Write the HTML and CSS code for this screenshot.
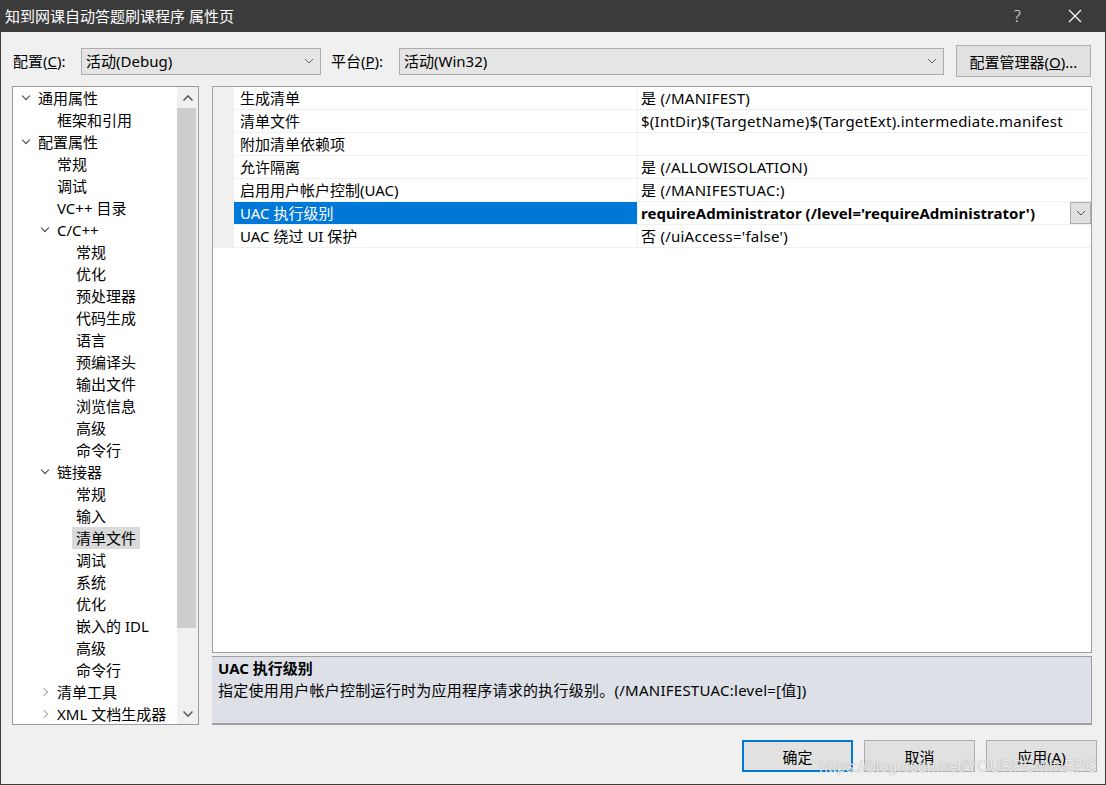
FILE: index.html
```html
<!DOCTYPE html>
<html lang="zh-CN">
<head>
    <meta charset="UTF-8">
    <title>知到网课自动答题刷课程序 属性页</title>
    <link rel="stylesheet" href="styles.css">
</head>
<body>
<div class="window">
    <div class="titlebar">
        <span class="title">知到网课自动答题刷课程序 属性页</span>
        <span class="help">?</span>
        <span class="close">
            <svg width="14" height="14" viewBox="0 0 14 14"><path d="M1 1 L13 13 M13 1 L1 13" stroke="#fff" stroke-width="1.2" fill="none"/></svg>
        </span>
    </div>

    <div class="config-row">
        <span class="config-label">配置(<u>C</u>):</span>
        <div class="combo combo-config">
            <span>活动(Debug)</span>
            <svg class="combo-arrow" width="10" height="6" viewBox="0 0 10 6"><path d="M1 1 L5 5 L9 1" stroke="#606060" fill="none"/></svg>
        </div>
        <span class="config-label platform-label">平台(<u>P</u>):</span>
        <div class="combo combo-platform">
            <span>活动(Win32)</span>
            <svg class="combo-arrow" width="10" height="6" viewBox="0 0 10 6"><path d="M1 1 L5 5 L9 1" stroke="#606060" fill="none"/></svg>
        </div>
        <button class="btn btn-manager">配置管理器(<u>O</u>)...</button>
    </div>

    <div class="main">
        <div class="tree">
            <ul class="tree-list">
                <li class="lvl0"><span class="chev open"></span>通用属性</li>
                <li class="lvl1"><span class="chev"></span>框架和引用</li>
                <li class="lvl0"><span class="chev open"></span>配置属性</li>
                <li class="lvl1"><span class="chev"></span>常规</li>
                <li class="lvl1"><span class="chev"></span>调试</li>
                <li class="lvl1"><span class="chev"></span>VC++ 目录</li>
                <li class="lvl1"><span class="chev open"></span>C/C++</li>
                <li class="lvl2"><span class="chev"></span>常规</li>
                <li class="lvl2"><span class="chev"></span>优化</li>
                <li class="lvl2"><span class="chev"></span>预处理器</li>
                <li class="lvl2"><span class="chev"></span>代码生成</li>
                <li class="lvl2"><span class="chev"></span>语言</li>
                <li class="lvl2"><span class="chev"></span>预编译头</li>
                <li class="lvl2"><span class="chev"></span>输出文件</li>
                <li class="lvl2"><span class="chev"></span>浏览信息</li>
                <li class="lvl2"><span class="chev"></span>高级</li>
                <li class="lvl2"><span class="chev"></span>命令行</li>
                <li class="lvl1"><span class="chev open"></span>链接器</li>
                <li class="lvl2"><span class="chev"></span>常规</li>
                <li class="lvl2"><span class="chev"></span>输入</li>
                <li class="lvl2"><span class="chev"></span><span class="selected">清单文件</span></li>
                <li class="lvl2"><span class="chev"></span>调试</li>
                <li class="lvl2"><span class="chev"></span>系统</li>
                <li class="lvl2"><span class="chev"></span>优化</li>
                <li class="lvl2"><span class="chev"></span>嵌入的 IDL</li>
                <li class="lvl2"><span class="chev"></span>高级</li>
                <li class="lvl2"><span class="chev"></span>命令行</li>
                <li class="lvl1"><span class="chev closed"></span>清单工具</li>
                <li class="lvl1"><span class="chev closed"></span>XML 文档生成器</li>
            </ul>
            <div class="scrollbar">
                <div class="scroll-btn">
                    <svg width="12" height="8" viewBox="0 0 12 8"><path d="M1.5 6.5 L6 2 L10.5 6.5" stroke="#606060" stroke-width="1.6" fill="none"/></svg>
                </div>
                <div class="scroll-track">
                    <div class="scroll-thumb"></div>
                </div>
                <div class="scroll-btn">
                    <svg width="12" height="8" viewBox="0 0 12 8"><path d="M1.5 1.5 L6 6 L10.5 1.5" stroke="#606060" stroke-width="1.6" fill="none"/></svg>
                </div>
            </div>
        </div>

        <div class="right">
            <div class="grid">
                <div class="grid-row">
                    <div class="gutter"></div>
                    <div class="cell name">生成清单</div>
                    <div class="cell value">是 (/MANIFEST)</div>
                </div>
                <div class="grid-row">
                    <div class="gutter"></div>
                    <div class="cell name">清单文件</div>
                    <div class="cell value">$(IntDir)$(TargetName)$(TargetExt).intermediate.manifest</div>
                </div>
                <div class="grid-row">
                    <div class="gutter"></div>
                    <div class="cell name">附加清单依赖项</div>
                    <div class="cell value"></div>
                </div>
                <div class="grid-row">
                    <div class="gutter"></div>
                    <div class="cell name">允许隔离</div>
                    <div class="cell value">是 (/ALLOWISOLATION)</div>
                </div>
                <div class="grid-row">
                    <div class="gutter"></div>
                    <div class="cell name">启用用户帐户控制(UAC)</div>
                    <div class="cell value">是 (/MANIFESTUAC:)</div>
                </div>
                <div class="grid-row active">
                    <div class="gutter"></div>
                    <div class="cell name">UAC 执行级别</div>
                    <div class="cell value">
                        <span class="bold">requireAdministrator (/level='requireAdministrator')</span>
                        <span class="drop-btn">
                            <svg width="10" height="6" viewBox="0 0 10 6"><path d="M1 1 L5 5 L9 1" stroke="#505050" fill="none"/></svg>
                        </span>
                    </div>
                </div>
                <div class="grid-row">
                    <div class="gutter"></div>
                    <div class="cell name">UAC 绕过 UI 保护</div>
                    <div class="cell value">否 (/uiAccess='false')</div>
                </div>
            </div>
            <div class="desc">
                <div class="desc-title">UAC 执行级别</div>
                <div class="desc-text">指定使用用户帐户控制运行时为应用程序请求的执行级别。(/MANIFESTUAC:level=[值])</div>
            </div>
        </div>
    </div>

    <div class="footer">
        <button class="btn btn-ok">确定</button>
        <button class="btn">取消</button>
        <button class="btn">应用(<u>A</u>)</button>
    </div>

    <div class="watermark">https://blog.csdn.net/YOURPCMINEPC</div>
</div>
</body>
</html>
```

FILE: styles.css
```css
* {
    box-sizing: border-box;
}
body {
    margin: 0;
    font-family: "Noto Sans", "Noto Sans CJK SC", sans-serif;
    font-size: 15px;
    color: #000;
    background: #f0f0f0;
}
.window {
    position: relative;
    width: 1106px;
    height: 785px;
    background: #f0f0f0;
    border: 1px solid #3b3b3b;
    border-top: none;
    overflow: hidden;
}
.titlebar {
    display: flex;
    align-items: center;
    height: 32px;
    margin: 0 -1px;
    padding-left: 5px;
    background: #3b3b3b;
    color: #fff;
}
.title {
    flex: 1;
    line-height: 32px;
}
.help {
    width: 24px;
    padding-left: 4px;
    margin-right: 34px;
    font-size: 16px;
    font-weight: 300;
    color: #e8e8e8;
}
.close {
    display: flex;
    width: 14px;
    margin-right: 24px;
}

/* configuration row */
.config-row {
    display: flex;
    align-items: center;
    height: 32px;
    margin-top: 13px;
    padding-left: 12px;
}
.config-label {
    width: 68px;
    line-height: 20px;
}
.platform-label {
    margin-left: 10px;
}
.combo {
    display: flex;
    align-items: center;
    justify-content: space-between;
    height: 27px;
    padding: 0 6px 0 4px;
    background: #e5e5e5;
    border: 1px solid #acacac;
    line-height: 20px;
}
.combo-config {
    width: 240px;
}
.combo-platform {
    width: 545px;
}
.btn {
    height: 32px;
    padding: 0;
    font-family: inherit;
    font-size: 15px;
    color: #000;
    background: #e1e1e1;
    border: 1px solid #adadad;
}
.btn-manager {
    width: 135px;
    margin-left: 12px;
}

/* main area */
.main {
    display: flex;
    height: 639px;
    margin-top: 9px;
    padding-left: 11px;
}
.tree {
    display: flex;
    width: 187px;
    height: 639px;
    background: #fff;
    border: 1px solid #9a9a9a;
}
.tree-list {
    flex: 1;
    margin: 0;
    padding: 0;
    list-style: none;
    overflow: hidden;
}
.tree-list li {
    display: flex;
    align-items: center;
    height: 22px;
    white-space: nowrap;
    line-height: 20px;
}
.lvl0 {
    padding-left: 6px;
}
.lvl1 {
    padding-left: 25px;
}
.lvl2 {
    padding-left: 44px;
}
.chev {
    position: relative;
    flex: none;
    width: 19px;
    height: 22px;
}
.chev.open::before {
    content: "";
    position: absolute;
    left: 4px;
    top: 6px;
    width: 5px;
    height: 5px;
    border-right: 1.3px solid #404040;
    border-bottom: 1.3px solid #404040;
    transform: rotate(45deg);
}
.chev.closed::before {
    content: "";
    position: absolute;
    left: 3px;
    top: 8px;
    width: 5px;
    height: 5px;
    border-right: 1.3px solid #a8a8a8;
    border-bottom: 1.3px solid #a8a8a8;
    transform: rotate(-45deg);
}
.selected {
    margin-left: -4px;
    padding: 0 4px;
    line-height: 22px;
    background: #dadada;
}
.scrollbar {
    display: flex;
    flex-direction: column;
    width: 21px;
    background: #f0f0f0;
}
.scroll-btn {
    display: flex;
    align-items: center;
    justify-content: center;
    height: 21px;
}
.scroll-track {
    flex: 1;
}
.scroll-thumb {
    height: 520px;
    margin-right: 2px;
    background: #cdcdcd;
}

/* property grid */
.right {
    display: flex;
    flex-direction: column;
    width: 880px;
    margin-left: 13px;
}
.grid {
    height: 568px;
    background: #fff;
    border: 1px solid #a0a0a0;
}
.grid-row {
    display: flex;
    height: 23px;
}
.gutter {
    width: 21px;
    background: #f0f0f0;
}
.cell {
    height: 23px;
    line-height: 22px;
    white-space: nowrap;
    border-bottom: 1px solid #f0f0f0;
}
.name {
    width: 404px;
    padding-left: 6px;
    border-right: 1px solid #f0f0f0;
}
.value {
    display: flex;
    justify-content: space-between;
    flex: 1;
    padding-left: 3px;
    letter-spacing: 0.25px;
}
.active .name {
    background: #0078d7;
    color: #fff;
    border-bottom-color: #f0f0f0;
}
.bold {
    font-weight: bold;
    letter-spacing: 0.05px;
}
.drop-btn {
    display: flex;
    align-items: center;
    justify-content: center;
    width: 21px;
    height: 22px;
    background: #e1e1e1;
    border: 1px solid #adadad;
}
.desc {
    height: 69px;
    margin-top: 3px;
    padding-left: 6px;
    background: #dde0e7;
    border-top: 1px solid #a0a0a0;
    border-bottom: 2px solid #a0a0a0;
    border-right: 1px solid #a0a0a0;
    line-height: 22px;
}
.desc-title {
    font-weight: bold;
}
.desc-text {
    letter-spacing: 0.25px;
}

/* buttons */
.footer {
    display: flex;
    justify-content: flex-end;
    gap: 11px;
    margin-top: 15px;
    padding-right: 8px;
}
.footer .btn {
    width: 111px;
}
.btn-ok {
    border: 2px solid #0078d7;
}
.watermark {
    position: absolute;
    left: 818px;
    top: 757px;
    font-family: "Liberation Sans", sans-serif;
    font-size: 17px;
    color: rgba(255, 255, 255, 0.85);
    text-shadow: 0 0 1px rgba(0, 0, 0, 0.45);
    white-space: nowrap;
    transform: scaleX(0.94);
    transform-origin: left center;
}
```
